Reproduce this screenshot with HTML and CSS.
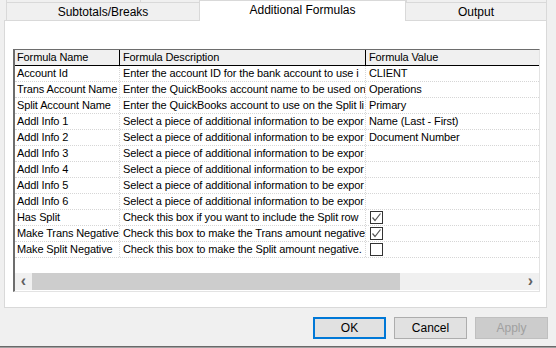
FILE: index.html
```html
<!DOCTYPE html>
<html>
<head>
    <title>Export Settings</title>
    <link rel="stylesheet" href="styles.css">
</head>
<body>

<div class="tabstrip">
    <div class="backrow">
        <div class="backtab first"></div>
        <div class="backtab mid"></div>
        <div class="backtab last"></div>
    </div>
    <div class="frontrow">
        <div class="tab sub">Subtotals/Breaks</div>
        <div class="tab active">Additional Formulas</div>
        <div class="tab out">Output</div>
    </div>
</div>

<div class="panel">
    <div class="grid">
        <div class="row head">
            <div class="cell name">Formula Name</div>
            <div class="cell desc">Formula Description</div>
            <div class="cell value">Formula Value</div>
        </div>
        <div class="rows">
            <div class="row">
                <div class="cell name">Account Id</div>
                <div class="cell desc">Enter the account ID for the bank account to use i</div>
                <div class="cell value">CLIENT</div>
            </div>
            <div class="row">
                <div class="cell name">Trans Account Name</div>
                <div class="cell desc">Enter the QuickBooks account name to be used on</div>
                <div class="cell value">Operations</div>
            </div>
            <div class="row">
                <div class="cell name">Split Account Name</div>
                <div class="cell desc">Enter the QuickBooks account to use on the Split li</div>
                <div class="cell value">Primary</div>
            </div>
            <div class="row">
                <div class="cell name">Addl Info 1</div>
                <div class="cell desc">Select a piece of additional information to be expor</div>
                <div class="cell value">Name (Last - First)</div>
            </div>
            <div class="row">
                <div class="cell name">Addl Info 2</div>
                <div class="cell desc">Select a piece of additional information to be expor</div>
                <div class="cell value">Document Number</div>
            </div>
            <div class="row">
                <div class="cell name">Addl Info 3</div>
                <div class="cell desc">Select a piece of additional information to be expor</div>
                <div class="cell value"></div>
            </div>
            <div class="row">
                <div class="cell name">Addl Info 4</div>
                <div class="cell desc">Select a piece of additional information to be expor</div>
                <div class="cell value"></div>
            </div>
            <div class="row">
                <div class="cell name">Addl Info 5</div>
                <div class="cell desc">Select a piece of additional information to be expor</div>
                <div class="cell value"></div>
            </div>
            <div class="row">
                <div class="cell name">Addl Info 6</div>
                <div class="cell desc">Select a piece of additional information to be expor</div>
                <div class="cell value"></div>
            </div>
            <div class="row">
                <div class="cell name">Has Split</div>
                <div class="cell desc">Check this box if you want to include the Split row</div>
                <div class="cell value"><span class="check"><svg width="11" height="11" viewBox="0 0 11 11"><path d="M1.5 5.5 L4 8.5 L9.5 1.5" fill="none" stroke="#555" stroke-width="1.2"/></svg></span></div>
            </div>
            <div class="row">
                <div class="cell name">Make Trans Negative</div>
                <div class="cell desc">Check this box to make the Trans amount negative</div>
                <div class="cell value"><span class="check"><svg width="11" height="11" viewBox="0 0 11 11"><path d="M1.5 5.5 L4 8.5 L9.5 1.5" fill="none" stroke="#555" stroke-width="1.2"/></svg></span></div>
            </div>
            <div class="row">
                <div class="cell name">Make Split Negative</div>
                <div class="cell desc">Check this box to make the Split amount negative.</div>
                <div class="cell value"><span class="check"></span></div>
            </div>
        </div>
        <div class="hscroll">
            <div class="arrow">&lsaquo;</div>
            <div class="track"><div class="thumb"></div></div>
            <div class="arrow">&rsaquo;</div>
        </div>
    </div>
</div>

<div class="buttons">
    <button class="btn default">OK</button>
    <button class="btn">Cancel</button>
    <button class="btn" disabled>Apply</button>
</div>

<div class="bottomline"></div>

</body>
</html>
```

FILE: styles.css
```css
body {
    margin: 0;
    width: 556px;
    height: 348px;
    overflow: hidden;
    background-color: #f0f0f0;
    font-family: "Liberation Sans", Arial, sans-serif;
    font-size: 11px;
    color: #000;
    display: flex;
    flex-direction: column;
}

/* tabs */
.tabstrip {
    display: grid;
    height: 20px;
}

.backrow, .frontrow {
    grid-area: 1 / 1;
    display: flex;
}

.backrow {
    height: 3px;
    padding-left: 6px;
}

.backtab {
    border-left: 1px solid #d9d9d9;
    border-right: 1px solid #d9d9d9;
    box-sizing: border-box;
}

.backtab.first { width: 135px; }
.backtab.mid { width: 59px; border-left: none; }
.backtab.last { margin-left: 206px; width: 141px; }

.frontrow {
    padding-left: 6px;
    align-items: flex-end;
    position: relative;
}

.tab {
    box-sizing: border-box;
    height: 18px;
    border: 1px solid #d9d9d9;
    border-bottom: none;
    background-color: #f0f0f0;
    font-size: 12px;
    text-align: center;
    line-height: 18px;
}

.tab.sub { width: 193px; border-right: none; }
.tab.out { width: 141px; border-left: none; }

.tab.active {
    width: 207px;
    height: 21px;
    margin-bottom: -1px;
    background-color: #fff;
    line-height: 19px;
    position: relative;
}

/* panel */
.panel {
    box-sizing: border-box;
    margin-left: 4px;
    width: 543px;
    height: 288px;
    background-color: #fff;
    border: 1px solid #d9d9d9;
    padding: 28px 0 0 8px;
}

.grid {
    box-sizing: border-box;
    width: 527px;
    height: 243px;
    border-left: 2px solid #6d6d6d;
    border-top: 1px solid #6d6d6d;
    border-right: 1px solid #e3e3e3;
    border-bottom: 1px solid #e3e3e3;
    display: flex;
    flex-direction: column;
    overflow: hidden;
}

.rows {
    flex: 1;
}

.row {
    display: flex;
    height: 16px;
    border-bottom: 1px dotted #d6d6d6;
    box-sizing: border-box;
}

.row.head {
    background-color: #f0f0f0;
    border-bottom: 1px solid #000;
}

.cell {
    box-sizing: border-box;
    padding-left: 3px;
    white-space: nowrap;
    overflow: hidden;
    line-height: 15px;
    letter-spacing: -0.12px;
    border-right: 1px dotted #d6d6d6;
}

.head .cell {
    border-right: 1px solid #000;
}

.cell.name { width: 105px; padding-left: 2px; }
.cell.desc { width: 246px; }
.cell.value { flex: 1; border-right: none; }
.head .cell.value { border-right: none; }

.check {
    display: inline-block;
    box-sizing: border-box;
    width: 13px;
    height: 13px;
    margin: 1px 0 0 1px;
    border: 1px solid #333;
    background-color: #fff;
    vertical-align: top;
}

.check svg {
    display: block;
}

/* horizontal scrollbar */
.hscroll {
    display: flex;
    height: 17px;
    background-color: #f0f0f0;
    margin-bottom: 1px;
}

.arrow {
    width: 17px;
    text-align: center;
    font-size: 16px;
    font-weight: bold;
    line-height: 15px;
    color: #606060;
}

.track {
    flex: 1;
}

.thumb {
    width: 368px;
    height: 100%;
    background-color: #cdcdcd;
}

/* buttons */
.buttons {
    display: flex;
    justify-content: flex-end;
    gap: 8px;
    padding: 9px 8px 0 0;
}

.btn {
    box-sizing: border-box;
    width: 73px;
    height: 22px;
    background-color: #e1e1e1;
    border: 1px solid #adadad;
    font-family: "Liberation Sans", Arial, sans-serif;
    font-size: 12px;
    color: #000;
    padding: 0;
}

.btn.default {
    border: 2px solid #0078d7;
}

.btn:disabled {
    background-color: #cccccc;
    border-color: #bfbfbf;
    color: #a0a0a0;
}

.bottomline {
    margin-top: auto;
    height: 1px;
    border-top: 1px solid #696969;
    background-color: #a0a0a0;
}
```
